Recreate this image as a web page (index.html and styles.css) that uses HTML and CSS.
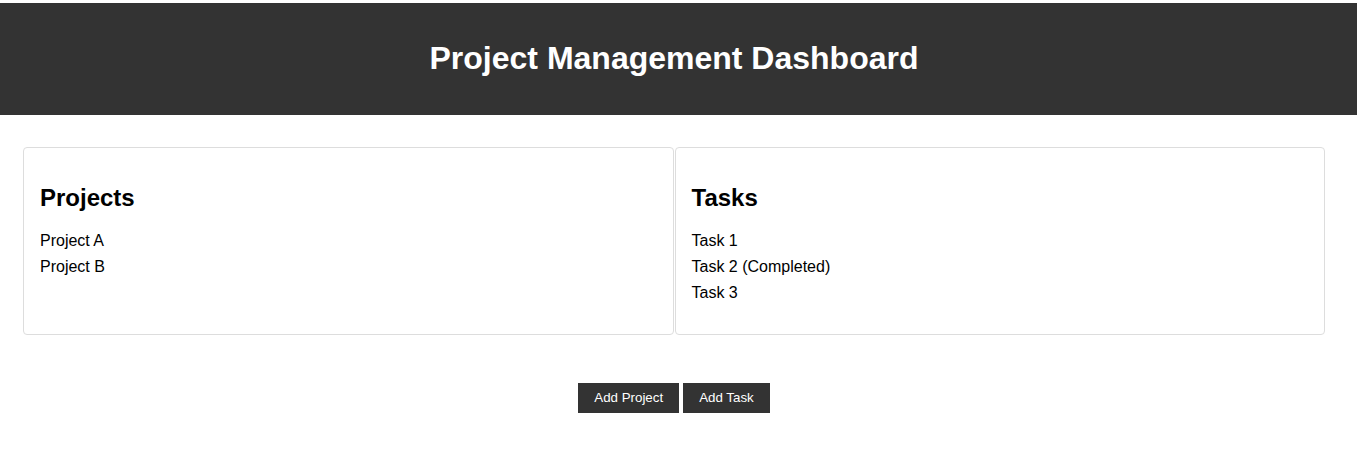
FILE: index.html
```html
<!DOCTYPE html>
<html lang="en">
<head>
<meta charset="utf-8">
<title>Project Management Dashboard</title>
<link rel="stylesheet" href="styles.css">
</head>
<body>
<header class="top-bar">
  <h1 class="title">Project Management Dashboard</h1>
</header>
<main class="board">
  <section class="card">
    <h2 class="card-title">Projects</h2>
    <ul class="items">
      <li class="item">Project A</li>
      <li class="item">Project B</li>
    </ul>
  </section>
  <section class="card">
    <h2 class="card-title">Tasks</h2>
    <ul class="items">
      <li class="item">Task 1</li>
      <li class="item">Task 2 (Completed)</li>
      <li class="item">Task 3</li>
    </ul>
  </section>
</main>
<div class="actions">
  <button class="btn">Add Project</button>
  <button class="btn">Add Task</button>
</div>
</body>
</html>
```
FILE: styles.css
```css
html, body {
  margin: 0;
  padding: 0;
  background: #fff;
}
body {
  font-family: "Liberation Sans", Arial, sans-serif;
  color: #000;
  padding-top: 3px;
}
.top-bar {
  background: #333;
  color: #fff;
  padding: 16px 9px 16px 0;
  text-align: center;
}
.title {
  margin: 21.44px 0;
  font-size: 32px;
  font-weight: bold;
}
.board {
  width: 1302px;
  margin: 32px 0 0 23px;
  display: flex;
  gap: 1px;
}
.card {
  flex: 1;
  border: 1px solid #ddd;
  border-radius: 4px;
  padding: 0 16px 16px;
}
.card-title {
  font-size: 24px;
  font-weight: bold;
  margin: 36px 0 20px;
}
.items {
  list-style: none;
  margin: 0 0 16px;
  padding: 0;
}
.item {
  font-size: 16px;
  line-height: 18px;
  margin-bottom: 8px;
}
.actions {
  width: 1348px;
  display: flex;
  justify-content: center;
  gap: 4px;
  margin-top: 48px;
}
.btn {
  font-family: "Liberation Sans", Arial, sans-serif;
  font-size: 13.333px;
  background: #333;
  color: #fff;
  border: none;
  height: 30px;
  padding: 0 16px;
  cursor: pointer;
}
```
